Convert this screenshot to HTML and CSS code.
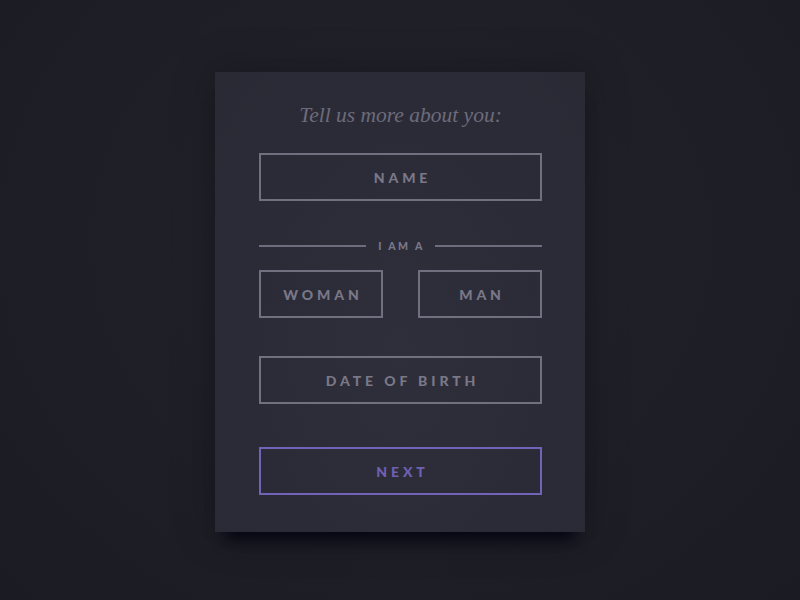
FILE: index.html
```html
<!DOCTYPE html>
<html>
<head>
<meta charset="utf-8">
<link rel="stylesheet" href="styles.css">
</head>
<body>
<div class="card">
  <h1 class="title">Tell us more about you:</h1>
  <div class="field field-name">NAME</div>
  <div class="divider"><span class="line"></span><span class="divider-text">I AM A</span><span class="line"></span></div>
  <div class="choices">
    <div class="field choice">WOMAN</div>
    <div class="field choice">MAN</div>
  </div>
  <div class="field field-dob">DATE OF BIRTH</div>
  <div class="field field-next">NEXT</div>
</div>
</body>
</html>
```

FILE: styles.css
```css
html, body {
  margin: 0;
  padding: 0;
  height: 100%;
}
body {
  background: radial-gradient(ellipse at 50% 40%, #23232d 0%, #1e1e27 60%, #1b1b23 100%);
  font-family: "Lato", "Liberation Sans", sans-serif;
  overflow: hidden;
}
.card {
  box-sizing: border-box;
  width: 370px;
  height: 460px;
  margin: 72px auto 0;
  padding: 28px 43px 0 44px;
  background: radial-gradient(ellipse at 50% 60%, #2f2f3b 0%, #2b2b37 60%, #2a2a35 100%);
  box-shadow: 0 18px 14px -10px rgba(5, 5, 18, 0.95), 0 0 40px rgba(0, 0, 0, 0.25);
  display: flex;
  flex-direction: column;
}
.title {
  margin: 0;
  font-family: "Liberation Serif", "DejaVu Serif", serif;
  font-style: italic;
  font-weight: normal;
  font-size: 21.5px;
  line-height: 30px;
  height: 30px;
  text-align: center;
  color: #6d6b7b;
}
.field {
  box-sizing: border-box;
  height: 48px;
  border: 2px solid #716f80;
  display: flex;
  align-items: center;
  justify-content: center;
  color: #7a7888;
  font-weight: 900;
  font-size: 14px;
  letter-spacing: 3.9px;
  padding-left: 4px;
}
.field-name {
  margin-top: 23px;
}
.divider {
  margin-top: 39px;
  height: 12px;
  display: flex;
  align-items: center;
  gap: 10px;
}
.line {
  flex: 1;
  height: 2px;
  background: #6f6d7d;
}
.divider-text {
  color: #7a7888;
  font-weight: 900;
  font-size: 10.5px;
  letter-spacing: 2.4px;
  padding-left: 2px;
}
.choices {
  margin-top: 18px;
  display: flex;
  justify-content: space-between;
}
.choice {
  width: 124px;
}
.field-dob {
  margin-top: 38px;
}
.field-next {
  margin-top: 43px;
  border-color: #7262b8;
  color: #6e60b2;
}
```
